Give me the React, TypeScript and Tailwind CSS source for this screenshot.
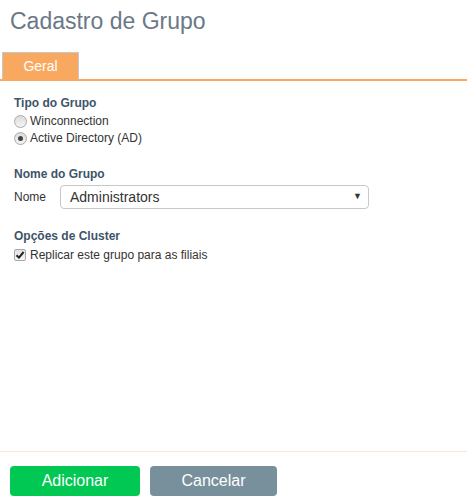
import React from "react";

const Radio = ({ checked, label }: { checked?: boolean; label: string }) => (
  <label className="flex items-center h-4 gap-[3px]">
    <span className="w-[13px] h-[13px] rounded-full border border-[#a9a9a9] bg-gradient-to-b from-[#dcdcdc] to-[#f4f4f4] flex items-center justify-center">
      {checked && <span className="w-[5px] h-[5px] rounded-full bg-[#444]" />}
    </span>
    <span className="text-[12px] text-[#333]">{label}</span>
  </label>
);

const App = () => {
  return (
    <div
      className="h-[503px] w-[467px] bg-white flex flex-col"
      style={{ fontFamily: "'Liberation Sans', Arial, sans-serif" }}
    >
      {/* TITLE */}
      <h1 className="pl-[10px] pt-[8px] text-[23px] leading-[26px] text-[#6b7886]">Cadastro de Grupo</h1>

      {/* TABS */}
      <div className="mt-[18px] pl-[2px] border-b-2 border-[#f9a95f] flex">
        <div className="w-[77px] h-[27px] bg-[#f9a95f] border border-b-0 border-[#c8c8c8] text-white text-[14px] flex items-center justify-center pt-[1px]">
          Geral
        </div>
      </div>

      {/* BODY */}
      <div className="flex-1 pl-[14px] pt-[14px]">
        <section>
          <p className="text-[12px] font-bold text-[#3d5469] leading-[16px]">Tipo do Grupo</p>
          <div className="mt-[2px] flex flex-col gap-[1px]">
            <Radio label="Winconnection" />
            <Radio checked label="Active Directory (AD)" />
          </div>
        </section>

        <section className="mt-[20px]">
          <p className="text-[12px] font-bold text-[#3d5469] leading-[16px]">Nome do Grupo</p>
          <div className="mt-[3px] flex items-center">
            <span className="w-[46px] text-[12px] text-[#333]">Nome</span>
            <div className="w-[309px] h-[24px] border border-[#c8c8c8] rounded-[4px] flex items-center justify-between pl-[9px] pr-[6px]">
              <span className="text-[14px] text-[#333]">Administrators</span>
              <span className="text-[9px] text-[#333]">▼</span>
            </div>
          </div>
        </section>

        <section className="mt-[19px]">
          <p className="text-[12px] font-bold text-[#3d5469] leading-[16px]">Opções de Cluster</p>
          <label className="mt-[2px] flex items-center gap-[4px]">
            <span className="w-[12px] h-[12px] rounded-[2px] border border-[#a9a9a9] bg-gradient-to-b from-[#e2e2e2] to-[#f6f6f6] flex items-center justify-center">
              <svg width="10" height="10" viewBox="0 0 10 10">
                <path d="M1.5 5.2 L4 7.6 L8.6 2" stroke="#222" strokeWidth="2" fill="none" />
              </svg>
            </span>
            <span className="text-[12px] text-[#333]">Replicar este grupo para as filiais</span>
          </label>
        </section>
      </div>

      {/* FOOTER */}
      <div className="border-t border-[#fde6d4] h-[52px] pl-[10px] pt-[14px] flex gap-[10px]">
        <button className="w-[130px] h-[30px] rounded-[4px] bg-[#00c853] text-white text-[16px]">Adicionar</button>
        <button className="w-[127px] h-[30px] rounded-[4px] bg-[#78909c] text-white text-[16px]">Cancelar</button>
      </div>
    </div>
  );
};

export default App;
